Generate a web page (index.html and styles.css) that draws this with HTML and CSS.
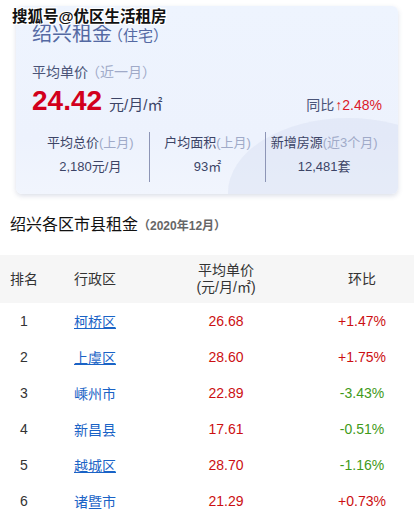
FILE: index.html
```html
<!DOCTYPE html>
<html lang="zh-CN">
<head>
<meta charset="utf-8">
<link rel="stylesheet" href="styles.css">
</head>
<body>
<div class="watermark">搜狐号@优区生活租房</div>
<div class="card">
  <div class="deco"></div>
  <div class="title">绍兴租金<span class="title-sub">（住宅）</span></div>
  <div class="sub-label">平均单价<span class="muted">（近一月）</span></div>
  <div class="price-row">
    <div class="price"><span class="price-num">24.42</span><span class="price-unit">元/月/㎡</span></div>
    <div class="yoy">同比<span class="yoy-val">↑2.48%</span></div>
  </div>
  <div class="stats">
    <div class="stat">
      <div class="stat-label">平均总价<span class="muted">(上月)</span></div>
      <div class="stat-value">2,180元/月</div>
    </div>
    <div class="stat">
      <div class="stat-label">户均面积<span class="muted">(上月)</span></div>
      <div class="stat-value">93㎡</div>
    </div>
    <div class="stat">
      <div class="stat-label">新增房源<span class="muted">(近3个月)</span></div>
      <div class="stat-value">12,481套</div>
    </div>
  </div>
</div>
<div class="section-title">绍兴各区市县租金<span class="section-date">（2020年12月）</span></div>
<table class="rank">
  <thead>
    <tr>
      <th class="c1">排名</th>
      <th class="c2">行政区</th>
      <th class="c3">平均单价<br>(元/月/㎡)</th>
      <th class="c4">环比</th>
    </tr>
  </thead>
  <tbody>
    <tr><td>1</td><td><span class="link u">柯桥区</span></td><td class="up">26.68</td><td class="up">+1.47%</td></tr>
    <tr><td>2</td><td><span class="link u">上虞区</span></td><td class="up">28.60</td><td class="up">+1.75%</td></tr>
    <tr><td>3</td><td><span class="link">嵊州市</span></td><td class="up">22.89</td><td class="down">-3.43%</td></tr>
    <tr><td>4</td><td><span class="link">新昌县</span></td><td class="up">17.61</td><td class="down">-0.51%</td></tr>
    <tr><td>5</td><td><span class="link u">越城区</span></td><td class="up">28.70</td><td class="down">-1.16%</td></tr>
    <tr><td>6</td><td><span class="link">诸暨市</span></td><td class="up">21.29</td><td class="up">+0.73%</td></tr>
  </tbody>
</table>
</body>
</html>
```

FILE: styles.css
```css
html, body {
  margin: 0;
  padding: 0;
  background: #ffffff;
}
body {
  font-family: "Liberation Sans", "Noto Sans CJK SC", sans-serif;
  color: #333333;
  width: 414px;
  overflow: hidden;
  position: relative;
}
.watermark {
  position: absolute;
  left: 12px;
  top: 6px;
  z-index: 5;
  font-size: 15.5px;
  font-weight: bold;
  line-height: 22px;
  color: #111111;
  text-shadow: 1px 0 0 #fff, -1px 0 0 #fff, 0 1px 0 #fff, 0 -1px 0 #fff,
    1px 1px 0 #fff, -1px -1px 0 #fff, 1px -1px 0 #fff, -1px 1px 0 #fff;
}
.card {
  position: relative;
  overflow: hidden;
  margin: 6px 16px 0;
  height: 188px;
  box-sizing: border-box;
  padding: 15px 16px 0;
  border-radius: 6px;
  background: linear-gradient(180deg, #eef4fe 0%, #edf2fd 70%, #f1f5fd 100%);
  box-shadow: 0 2px 5px rgba(60, 80, 130, 0.18);
}
.deco {
  position: absolute;
  right: -70px;
  top: 112px;
  width: 240px;
  height: 150px;
  border-radius: 50%;
  background: rgba(210, 218, 238, 0.35);
}
.title {
  position: relative;
  font-size: 20px;
  line-height: 26px;
  color: #5469a3;
}
.title-sub {
  font-size: 15px;
  margin-left: -4px;
}
.sub-label {
  position: relative;
  margin-top: 13px;
  font-size: 14px;
  line-height: 20px;
  color: #4a5478;
}
.muted {
  color: #a0aac8;
}
.sub-label .muted {
  margin-left: -2px;
}
.price-row {
  position: relative;
  display: flex;
  justify-content: space-between;
  align-items: baseline;
  height: 36px;
  line-height: 38px;
}
.price-num {
  font-size: 28px;
  font-weight: bold;
  color: #d2001c;
}
.price-unit {
  font-size: 15px;
  color: #3c4466;
  margin-left: 7px;
}
.yoy {
  font-size: 14px;
  color: #4a5478;
}
.yoy-val {
  color: #dc1a2a;
  margin-left: 1px;
}
.stats {
  position: relative;
  margin-top: 14px;
  display: grid;
  grid-template-columns: 1fr 1fr 1fr;
  height: 50px;
}
.stat {
  text-align: center;
  font-size: 13px;
  color: #3c4466;
}
.stat + .stat {
  border-left: 1px solid #8d95b6;
}
.stat-label {
  line-height: 18px;
  margin-top: 2px;
}
.stat-value {
  margin-top: 6px;
  line-height: 18px;
}
.section-title {
  margin: 20px 0 0 10px;
  font-size: 16px;
  line-height: 22px;
  color: #111111;
}
.section-date {
  font-size: 12px;
  font-weight: bold;
  color: #666666;
}
.rank {
  margin-top: 18px;
  width: 414px;
  border-collapse: collapse;
  font-size: 14px;
}
.rank th {
  background: #f6f6f6;
  font-weight: normal;
  height: 48px;
  padding: 0;
  line-height: 17px;
  color: #333333;
  text-align: center;
}
.rank .c1 { width: 48px; }
.rank .c2 { width: 94px; }
.rank .c3 { width: 168px; }
.rank td {
  height: 36px;
  padding: 0;
  text-align: center;
  color: #333333;
}
.link {
  color: #1a63c6;
}
.link.u {
  text-decoration: underline;
  text-underline-offset: 1px;
}
.rank td.up {
  color: #cc0f12;
}
.rank td.down {
  color: #3f9a1a;
}
```
